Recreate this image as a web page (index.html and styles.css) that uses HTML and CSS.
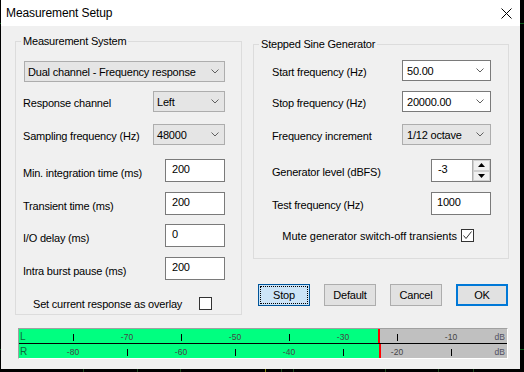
FILE: index.html
```html
<!DOCTYPE html>
<html>
<head>
<meta charset="utf-8">
<title>Measurement Setup</title>
<link rel="stylesheet" href="styles.css">
</head>
<body>
<div class="dialog">
  <div class="titlebar">
    <span class="title">Measurement Setup</span>
    <svg class="close" width="11" height="11" viewBox="0 0 11 11"><path d="M0.5 0.5L10.5 10.5M10.5 0.5L0.5 10.5" stroke="#000" stroke-width="1" fill="none"/></svg>
  </div>
  <div class="content">
    <div class="columns">
      <fieldset class="group group-left">
        <legend>Measurement System</legend>
        <div class="combo combo-wide"><span>Dual channel - Frequency response</span><svg class="chev" width="8" height="5" viewBox="0 0 8 5"><polyline points="0.5,0.5 4,4 7.5,0.5" fill="none" stroke="#606060"/></svg></div>
        <div class="row row-h21 mt9"><span class="lbl">Response channel</span><div class="combo combo-sm"><span>Left</span><svg class="chev" width="8" height="5" viewBox="0 0 8 5"><polyline points="0.5,0.5 4,4 7.5,0.5" fill="none" stroke="#606060"/></svg></div></div>
        <div class="row row-h21 mt12"><span class="lbl">Sampling frequency (Hz)</span><div class="combo combo-sm"><span>48000</span><svg class="chev" width="8" height="5" viewBox="0 0 8 5"><polyline points="0.5,0.5 4,4 7.5,0.5" fill="none" stroke="#606060"/></svg></div></div>
        <div class="row row-h23 mt14"><span class="lbl lbl-low">Min. integration time (ms)</span><div class="edit">200</div></div>
        <div class="row row-h23 mt10"><span class="lbl lbl-low">Transient time (ms)</span><div class="edit">200</div></div>
        <div class="row row-h23 mt9"><span class="lbl lbl-low">I/O delay (ms)</span><div class="edit">0</div></div>
        <div class="row row-h23 mt10"><span class="lbl lbl-low">Intra burst pause (ms)</span><div class="edit">200</div></div>
        <div class="row row-check check-left mt17"><span class="lbl">Set current response as overlay</span><span class="checkbox"></span></div>
      </fieldset>
      <div class="right-col">
        <fieldset class="group group-right">
          <legend>Stepped Sine Generator</legend>
          <div class="row row-h21"><span class="lbl">Start frequency (Hz)</span><div class="combo combo-edit"><span>50.00</span><svg class="chev" width="8" height="5" viewBox="0 0 8 5"><polyline points="0.5,0.5 4,4 7.5,0.5" fill="none" stroke="#606060"/></svg></div></div>
          <div class="row row-h21 mt10"><span class="lbl">Stop frequency (Hz)</span><div class="combo combo-edit"><span>20000.00</span><svg class="chev" width="8" height="5" viewBox="0 0 8 5"><polyline points="0.5,0.5 4,4 7.5,0.5" fill="none" stroke="#606060"/></svg></div></div>
          <div class="row row-h21 mt12"><span class="lbl">Frequency increment</span><div class="combo combo-list"><span>1/12 octave</span><svg class="chev" width="8" height="5" viewBox="0 0 8 5"><polyline points="0.5,0.5 4,4 7.5,0.5" fill="none" stroke="#606060"/></svg></div></div>
          <div class="row row-h23 mt14"><span class="lbl">Generator level (dBFS)</span>
            <div class="spin">
              <span class="spin-text">-3</span>
              <span class="spin-btns">
                <span class="spin-btn"><svg width="7" height="4" viewBox="0 0 7 4"><polygon points="0,4 7,4 3.5,0" fill="#000"/></svg></span>
                <span class="spin-btn"><svg width="7" height="4" viewBox="0 0 7 4"><polygon points="0,0 7,0 3.5,4" fill="#000"/></svg></span>
              </span>
            </div>
          </div>
          <div class="row row-h23 mt10"><span class="lbl">Test frequency (Hz)</span><div class="edit edit-r">1000</div></div>
          <div class="row row-check check-right mt14"><span class="lbl">Mute generator switch-off transients</span><span class="checkbox"><svg width="11" height="11" viewBox="0 0 11 11"><polyline points="1.5,5.5 4,8.5 9.5,1.5" fill="none" stroke="#333" stroke-width="1"/></svg></span></div>
        </fieldset>
        <div class="buttons">
          <button class="btn btn-focus"><span class="focus-ring">Stop</span></button>
          <button class="btn">Default</button>
          <button class="btn">Cancel</button>
          <button class="btn btn-default">OK</button>
        </div>
      </div>
    </div>
    <div class="meter">
      <div class="meter-row">
        <div class="fill" style="width:359px"></div>
        <span class="ch">L</span>
        <span class="cell"><i class="tick"></i></span>
        <span class="cell num">-70</span>
        <span class="cell"><i class="tick"></i></span>
        <span class="cell num">-50</span>
        <span class="cell"><i class="tick"></i></span>
        <span class="cell num">-30</span>
        <span class="cell"><i class="tick"></i></span>
        <span class="cell num">-10</span>
        <span class="unit">dB</span>
      </div>
      <div class="meter-sep"></div>
      <div class="meter-row">
        <div class="fill" style="width:360px"></div>
        <span class="ch">R</span>
        <span class="cell num">-80</span>
        <span class="cell"><i class="tick"></i></span>
        <span class="cell num">-60</span>
        <span class="cell"><i class="tick"></i></span>
        <span class="cell num">-40</span>
        <span class="cell"><i class="tick"></i></span>
        <span class="cell num">-20</span>
        <span class="cell"><i class="tick"></i></span>
        <span class="unit">dB</span>
      </div>
    </div>
  </div>
</div>
</body>
</html>
```

FILE: styles.css
```css
* { box-sizing: border-box; }
html, body { margin: 0; padding: 0; }
body {
  width: 524px;
  height: 372px;
  overflow: hidden;
  background-color: #000;
  background-image:
    linear-gradient(#0d5a1a, #0d5a1a),
    linear-gradient(#0d5a1a, #0d5a1a),
    linear-gradient(#1f4a1f, #1f4a1f),
    linear-gradient(#1f4a1f, #1f4a1f),
    linear-gradient(#1f4a1f, #1f4a1f),
    linear-gradient(#8a8a10, #8a8a10),
    linear-gradient(#1f4a1f, #1f4a1f),
    linear-gradient(#1f4a1f, #1f4a1f),
    linear-gradient(#1f4a1f, #1f4a1f),
    linear-gradient(#1f4a1f, #1f4a1f),
    linear-gradient(#1f4a1f, #1f4a1f);
  background-size:
    524px 1px, 524px 1px,
    1px 372px, 1px 372px, 1px 372px, 1px 372px, 1px 372px,
    1px 372px, 1px 372px, 1px 372px, 1px 372px;
  background-position:
    0 23px, 0 349px,
    83px 0, 137px 0, 180px 0, 265px 0, 281px 0,
    293px 0, 385px 0, 438px 0, 473px 0;
  background-repeat: no-repeat;
  font-family: "Liberation Sans", Arial, sans-serif;
  font-size: 11px;
  letter-spacing: -0.2px;
  color: #000;
}
.dialog {
  margin-left: 1px;
  width: 519px;
  height: 369px;
  background: #f0f0f0;
  display: flex;
  flex-direction: column;
}
.titlebar {
  height: 26px;
  flex: none;
  background: #fff;
  display: flex;
  align-items: center;
  justify-content: space-between;
  padding: 0 8px 0 5px;
}
.title { font-size: 12px; line-height: 16px; letter-spacing: -0.1px; }
.close { display: block; }

.content { padding: 8px 0 0 14px; }
.columns { display: flex; gap: 11px; align-items: flex-start; }

.group {
  margin: 0;
  border: 1px solid #dcdcdc;
  min-width: 0;
}
.group legend {
  line-height: 14px;
  padding: 0 2px;
}
.group-left {
  width: 227px;
  padding: 13px 16px 4px 8px;
}
.group-left legend { margin-left: -3px; }
.right-col { width: 256px; margin-top: 3px; }
.group-right {
  width: 256px;
  padding: 9px 17px 16px 19px;
}
.group-right legend { margin-left: -14px; }

.row {
  display: flex;
  align-items: center;
  justify-content: space-between;
}
.row-h21 { height: 21px; }
.row-h23 { height: 23px; }
.row-check { height: 13px; }
.mt9 { margin-top: 9px; }
.mt10 { margin-top: 10px; }
.mt12 { margin-top: 12px; }
.mt14 { margin-top: 14px; }
.mt17 { margin-top: 17px; }
.lbl { white-space: nowrap; line-height: 16px; margin-left: -1px; padding-top: 2px; }
.lbl-low { padding-top: 5px; }

.combo {
  height: 21px;
  display: flex;
  align-items: center;
  justify-content: space-between;
  background: #e5e5e5;
  border: 1px solid #adadad;
  padding: 0 5px 0 3px;
  white-space: nowrap;
  line-height: 16px;
}
.combo span { padding-top: 1px; }
.chev { display: block; flex: none; }
.combo-wide { width: 201px; }
.combo-sm { width: 72px; }
.combo-edit {
  width: 89px;
  background: #fff;
  border-color: #7a7a7a;
  padding: 0 6px 0 4px;
}
.combo-list { width: 89px; padding: 0 6px 0 4px; }

.edit {
  width: 60px;
  height: 23px;
  background: #fff;
  border: 1px solid #7a7a7a;
  padding: 1px 0 0 6px;
  line-height: 16px;
}
.edit-r { padding-left: 5px; }

.spin {
  width: 60px;
  height: 23px;
  display: flex;
  background: #fff;
  border: 1px solid #7a7a7a;
}
.spin-text { flex: 1; padding: 1px 0 0 6px; line-height: 16px; }
.spin-btns {
  width: 18px;
  display: flex;
  flex-direction: column;
  border-left: 1px solid #adadad;
}
.spin-btn {
  flex: 1;
  display: flex;
  align-items: center;
  justify-content: center;
  background: #f0f0f0;
  border: 1px solid #cfcfcf;
}
.spin-btn svg { display: block; }

.checkbox {
  width: 13px;
  height: 13px;
  flex: none;
  background: #fff;
  border: 1px solid #333;
  display: flex;
  align-items: center;
  justify-content: center;
}
.checkbox svg { display: block; }
.check-left { padding: 0 13px 0 10px; }
.check-left .lbl { padding-top: 0; }
.check-right { justify-content: flex-end; gap: 4px; padding-right: 17px; }
.check-right .lbl { padding-top: 0; letter-spacing: 0; }

.buttons {
  display: flex;
  gap: 14px;
  margin-top: 25px;
  padding-left: 5px;
}
.btn {
  width: 52px;
  height: 22px;
  margin: 0;
  padding: 0;
  font-family: inherit;
  font-size: 11px;
  letter-spacing: -0.2px;
  color: #000;
  background: #e1e1e1;
  border: 1px solid #adadad;
  display: flex;
  align-items: center;
  justify-content: center;
}
.btn-focus {
  background: #cce4f7;
  border-color: #005499;
  padding: 1px;
}
.focus-ring {
  flex: 1;
  align-self: stretch;
  display: flex;
  align-items: center;
  justify-content: center;
  border: 1px dotted #000;
}
.btn-default { border: 2px solid #0078d7; }

.meter {
  margin: 13px 0 0 3px;
  width: 490px;
  border-top: 1px solid #a0a0a0;
  border-left: 1px solid #a0a0a0;
  border-right: 1px solid #fff;
  border-bottom: 1px solid #fff;
  background: #c0c0c0;
}
.meter-row {
  position: relative;
  height: 14px;
  display: flex;
  align-items: flex-start;
  font-size: 8.5px;
  line-height: 10px;
  letter-spacing: 0;
}
.meter-sep { height: 1px; background: #000; }
.fill {
  position: absolute;
  left: 0;
  top: 0;
  bottom: 0;
  background: #00ff80;
  border-right: 2px solid #ff0000;
  box-sizing: content-box;
}
.ch {
  position: relative;
  width: 27px;
  padding: 2px 0 0 1px;
  color: #0a6b3a;
  font-size: 10px;
  line-height: 11px;
}
.cell {
  position: relative;
  width: 54px;
  height: 14px;
  display: flex;
  justify-content: center;
  padding-top: 3px;
  color: #454545;
}
.tick {
  display: block;
  width: 1px;
  height: 7px;
  margin-top: 2px;
  background: #000;
}
.unit {
  position: relative;
  margin-left: auto;
  padding: 3px 2px 0 0;
  color: #505060;
}
```
